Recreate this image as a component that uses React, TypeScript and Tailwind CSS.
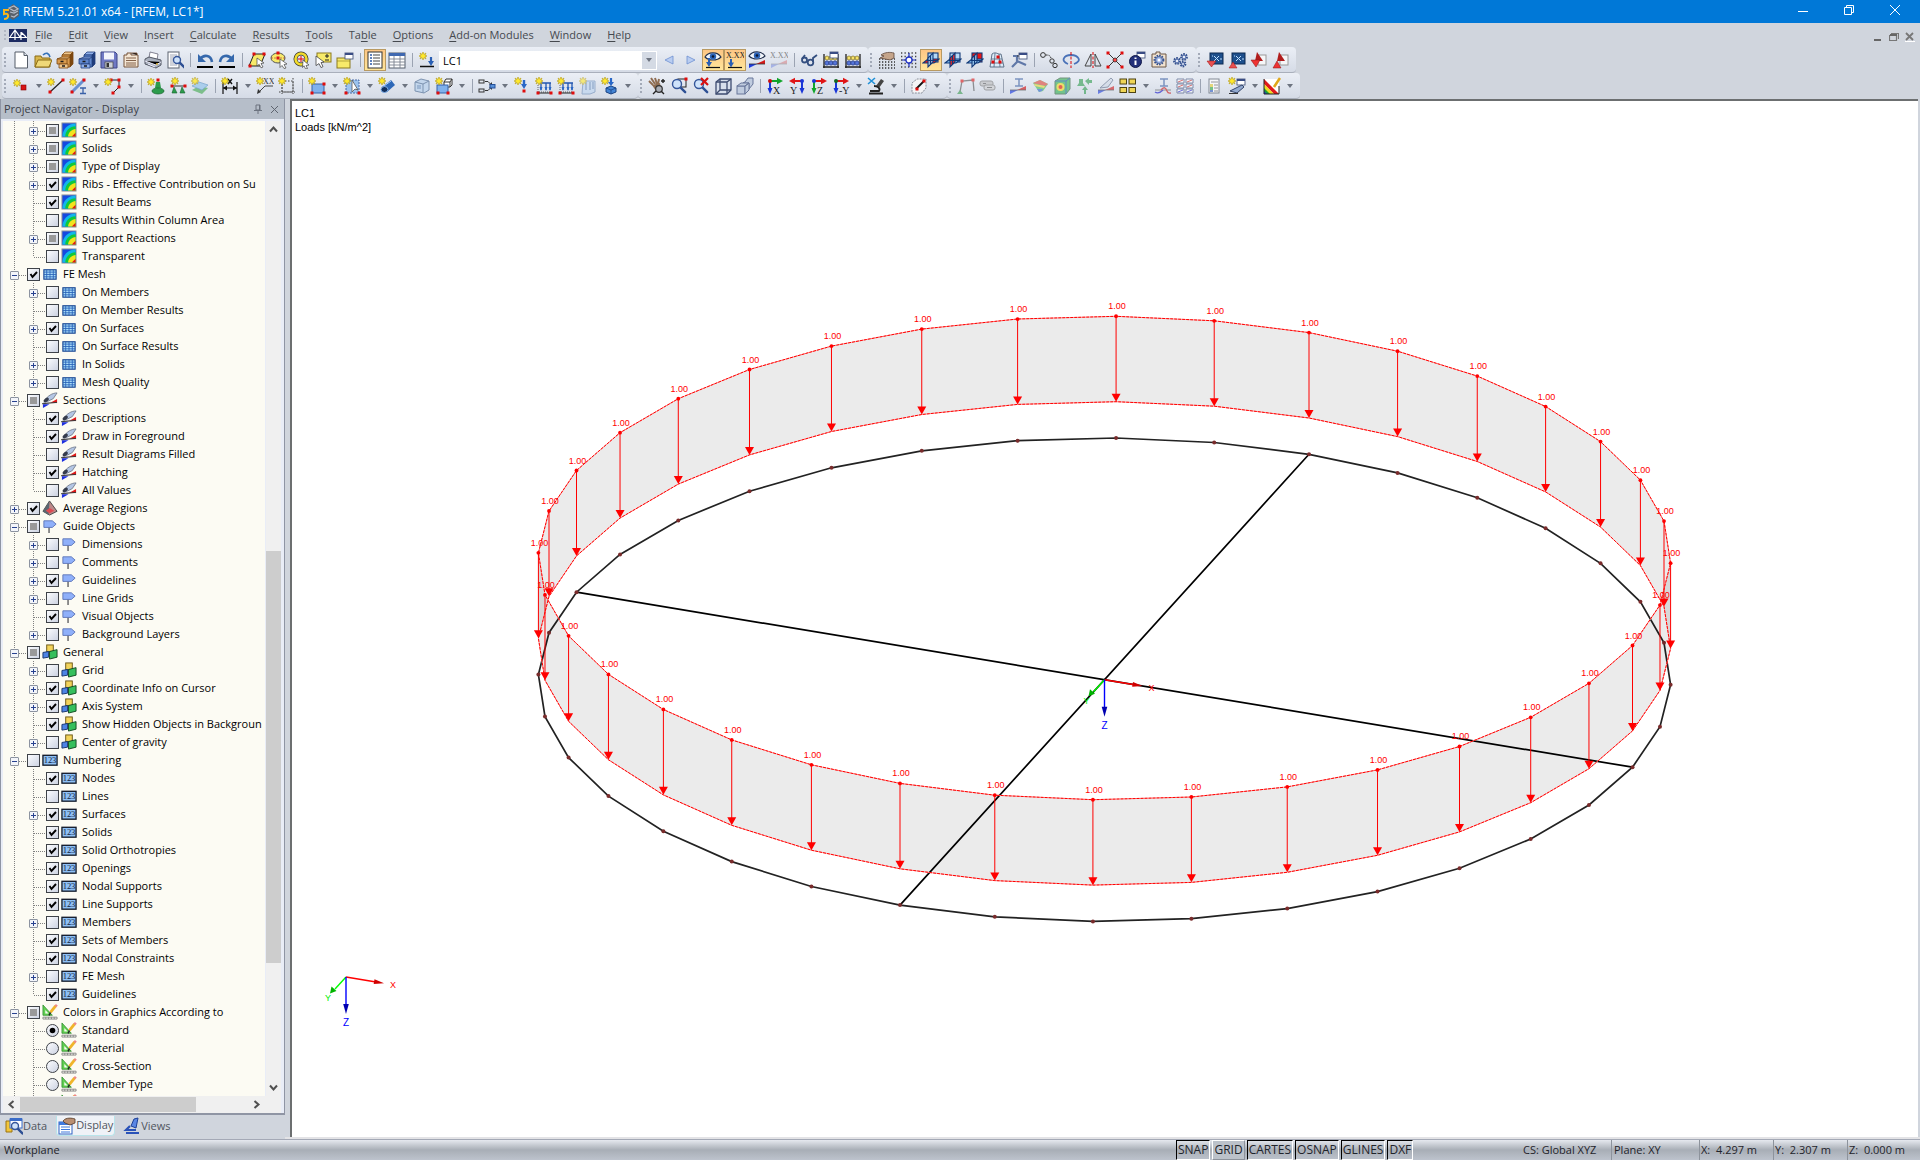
import type { ReactNode } from 'react';

/* ---------- icon building blocks (18 x 18 grid) ---------- */

const Star = ({ x = 4, y = 4 }: { x?: number; y?: number }) => (
  <g transform={`translate(${x} ${y})`}>
    <path d="M0-4L1-1.6 3-3 2-.8 4 0 2 .8 3 3 1 1.6 0 4-1 1.6-3 3-2 .8-4 0-2-.8-3-3-1-1.6z" fill="#ffe92b" stroke="#b59b10" strokeWidth=".6" />
  </g>
);

const Dot = ({ x, y, c = '#e00d0d' }: { x: number; y: number; c?: string }) => (
  <rect x={x - 1.5} y={y - 1.5} width="3" height="3" fill={c} />
);

const Glass = ({ x = 7, y = 7, r = 4 }: { x?: number; y?: number; r?: number }) => (
  <g>
    <path d={`M${x + r * 0.7} ${y + r * 0.7}l5 5`} stroke="#2d4f94" strokeWidth="2.4" strokeLinecap="round" />
    <circle cx={x} cy={y} r={r} fill="#cfe3fa" stroke="#34569a" strokeWidth="1.4" />
  </g>
);

// two stacked filing drawers, the upper one pulled open
const Cabinet = ({ a, b, line }: { a: string; b: string; line: string }) => (
  <g stroke={line} strokeWidth=".8">
    <path d="M6 4l3-3h8l-3 3z" fill={b} />
    <path d="M14 4l3-3v12l-3 3z" fill={line} />
    <path d="M6 4h8v12H6z" fill={a} />
    <path d="M1 8l5-2h8l-3 2z" fill={b} />
    <path d="M1 8h10v5H1z" fill={a} />
    <path d="M3 13h9v4H3z" fill={b} />
    <path d="M4.500 10.500h3M6 15h3" stroke="#1b1b1b" strokeWidth="1.300" />
  </g>
);

const Doc = ({ x = 3, y = 1, w = 12, h = 16 }: { x?: number; y?: number; w?: number; h?: number }) => (
  <rect x={x} y={y} width={w} height={h} fill="#fdfdfe" stroke="#5c6470" />
);

const Win = ({ x, y }: { x: number; y: number }) => (
  <g>
    <rect x={x} y={y} width="8" height="6" fill="#fff" stroke="#4d5b80" strokeWidth=".9" />
    <rect x={x} y={y} width="8" height="2" fill="#3a4d85" />
  </g>
);

const Axes = ({ label, a = '#12a52b', flip = false, d = '#1a36d8', hub = '#c81010' }: { label: string; a?: string; flip?: boolean; d?: string; hub?: string }) => (
  <g>
    <g transform={flip ? 'matrix(-1 0 0 1 18 0)' : undefined}>
      <path d="M4 4h8" stroke={a} strokeWidth="2" />
      <path d="M11 .8L17 4l-6 3.200z" fill={a} />
      <path d="M4 4v9" stroke={d} strokeWidth="2" />
      <path d="M1.500 11h5L4 17z" fill={d} />
      <circle cx="4" cy="4" r="2" fill={hub} />
    </g>
    <text x={flip ? 2 : 7} y="17" fontSize="10" fill="#222" fontFamily="Liberation Serif">{label}</text>
  </g>
);

const Eye = ({ y = 6 }: { y?: number }) => (
  <g>
    <path d={`M1 ${y}c3-5 12-6 16 0-4 4-12 4-16 0z`} fill="#f3f7fc" stroke="#22304e" strokeWidth="1.100" />
    <circle cx="9" cy={y - 0.5} r="3.200" fill="#2b63b8" />
    <circle cx="9" cy={y - 0.5} r="1.300" fill="#0a1530" />
  </g>
);

const Wedge = ({ soft = false }: { soft?: boolean }) => (
  <g opacity={soft ? 0.45 : 1}>
    <path d="M1 17v-4l8 0z" fill="#1d3de0" />
    <path d="M17 9v4H8z" fill="#d31818" />
    <path d="M1 13h16" stroke="#333" strokeWidth=".8" />
  </g>
);

const Planes = ({ front }: { front: 'x' | 'y' | 'z' }) => (
  <g strokeWidth="1.100" stroke="#123a78">
    <rect x="6" y="2" width="10" height="9" fill={front === 'z' ? '#e81717' : '#b5d8f6'} />
    <path d="M1 12l5-4h11l-5 4z" fill={front === 'x' ? '#e81717' : '#79b5ea'} />
    <path d="M6 7l5-5v9l-5 5z" fill={front === 'y' ? '#e81717' : '#9ccbf2'} fillOpacity=".85" />
    <path d="M5 9.500h11M8.500 4.500v9" />
  </g>
);

const Abacus = (
  <g>
    <path d="M2 3v14M16 3v14M1 16h16" stroke="#222" strokeWidth="1.300" />
    <path d="M2 7h14M2 12h14" stroke="#555" />
    <g fill="#f6e26a" stroke="#6b5a10" strokeWidth=".6"><circle cx="5" cy="7" r="2" /><circle cx="9" cy="7" r="2" /><circle cx="13" cy="7" r="2" /></g>
    <g fill="#5574d8" stroke="#1c2f75" strokeWidth=".6"><circle cx="5" cy="12" r="2.200" /><circle cx="9" cy="12" r="2.200" /><circle cx="13" cy="12" r="2.200" /></g>
  </g>
);

const Gear = ({ x, y, r }: { x: number; y: number; r: number }) => (
  <g>
    <circle cx={x} cy={y} r={r} fill="none" stroke="#33508f" strokeWidth="1.800" strokeDasharray="1.600 1" />
    <circle cx={x} cy={y} r={r - 1} fill="#9db4e4" stroke="#33508f" strokeWidth=".8" />
    <circle cx={x} cy={y} r={r / 3} fill="#fff" />
  </g>
);

const LoadFrame = (
  <g>
    <path d="M6 6h10M6 6v7M11 6v7M15 6v7" stroke="#2256b0" strokeWidth="1.300" fill="none" />
    <path d="M4.500 10h3L6 14zM9.500 10h3L11 14zM13.500 10h3L15 14z" fill="#2a67c6" />
    <path d="M3 8v7h13" stroke="#444" strokeWidth=".8" fill="none" strokeDasharray="1 1" />
    <path d="M3 16h13" stroke="#222" />
    <Dot x={3} y={16} /><Dot x={16} y={16} />
    <Star />
  </g>
);

const ibeam = <path d="M6 2h8M10 2v7M6 9h8" stroke="#4568a8" strokeWidth="1.500" fill="none" />;

const icons: Record<string, ReactNode> = {
  bridge: <g><rect width="18" height="13" y="3" fill="#1d2b62" /><path d="M0 11.500h18M6 4v10M12 6v8M1 11l5-7 5 7 2-4 4 4" stroke="#fff" strokeWidth="1.200" fill="none" /></g>,
  new: <g><path d="M3 1h9l3.500 3.500V17H3z" fill="#fff" stroke="#555d68" /><path d="M12 1v3.500h3.500" fill="#dfe5ee" stroke="#555d68" /></g>,
  open: <g><path d="M1 5h6l1 2h8v9H1z" fill="#d8b64c" stroke="#8a6a14" /><path d="M4 9h14l-3 7H1z" fill="#efd878" stroke="#8a6a14" /><path d="M9 4c3-3 6-2 7 2" fill="none" stroke="#3572b8" strokeWidth="1.600" /></g>,
  cabinet: <Cabinet a="#d99b4e" b="#f0c78c" line="#7c4710" />,
  cabinetBlue: <Cabinet a="#5f86cc" b="#8fb0ea" line="#203c7c" />,
  save: <g><path d="M1 1h14l2 2v14H1z" fill="#6f79c4" stroke="#3f4787" /><rect x="4" y="1.500" width="10" height="7" fill="#f2f4fb" /><rect x="5" y="11" width="8" height="6" fill="#cdd1d8" stroke="#444" strokeWidth=".7" /><rect x="6.500" y="12" width="2.500" height="4" fill="#333" /></g>,
  book: <g><path d="M2 4h3V2h4v2h7v12H2z" fill="#f4e6d4" stroke="#77543a" /><path d="M9 2h6v2M4 7h10M4 9.500h10M4 12h10M4 14h10" stroke="#77543a" strokeWidth=".9" /></g>,
  print: <g><path d="M5 7l1-6 8 2-1 6z" fill="#fff" stroke="#667" strokeWidth=".8" /><path d="M1 8l4-2 12 3v5l-5 3-11-4z" fill="#a9b0bd" stroke="#454b57" strokeWidth=".9" /><path d="M1 10l11 4 5-3M4 13l7 3" stroke="#eef" /><circle cx="13" cy="13" r="1" fill="#d8b23c" /></g>,
  preview: <g><Doc x={2} y={1} w={11} /><path d="M4 4h7M4 6h4M4 8h3M4 10h3M4 12h4M4 14h7" stroke="#8a93a3" strokeWidth=".8" /><Glass x={11} y={9} r={3.5} /></g>,
  undo: <g><path d="M4 8c4-5 11-4 12 3" fill="none" stroke="#3568ac" strokeWidth="2.600" /><path d="M2 3v8h8z" fill="#3568ac" /><path d="M1 16h16" stroke="#000" strokeWidth="2" /></g>,
  redo: <g><path d="M14 8C10 3 3 4 2 11" fill="none" stroke="#3568ac" strokeWidth="2.600" /><path d="M16 3v8H8z" fill="#3568ac" /><path d="M1 16h16" stroke="#000" strokeWidth="2" /></g>,
  selPoly: <g><path d="M6 3h11l-5 12H1z" fill="#f7ea6a" stroke="#222" /><Dot x={6} y={3} /><Dot x={16} y={3} /><Dot x={2} y={15} /><path d="M9 7l7 5-3 .5 2 3.500-2 .8-1.800-3.500L9 15z" fill="#fff" stroke="#444" strokeWidth=".7" /></g>,
  selEllipse: <g><ellipse cx="8" cy="7" rx="7" ry="5" fill="#f7ea6a" stroke="#555" /><Dot x={8} y={2} /><Dot x={8} y={7} /><path d="M1 7h14" stroke="#a33" strokeWidth=".6" strokeDasharray="2 1" /><path d="M10 8l7 5-3 .5 2 3.500-2 .5-2-3-2 2z" fill="#fff" stroke="#444" strokeWidth=".7" /></g>,
  selRing: <g><circle cx="9" cy="8" r="5.500" fill="none" stroke="#333" strokeWidth="4" /><circle cx="9" cy="8" r="5.500" fill="none" stroke="#f2dc2c" strokeWidth="2.600" /><path d="M9 5v6M6 8h6" stroke="#e00" /><path d="M11 9l6 5-3 .5 1.500 3-2 .3-1.500-3-1.500 1.700z" fill="#fff" stroke="#444" strokeWidth=".7" /></g>,
  selPlus: <g><rect x="3" y="2" width="14" height="9" fill="#f7ea6a" stroke="#8b7a1f" /><path d="M13 3v4M11 5h4M11 9h4" stroke="#222" /><path d="M2 5l8 6-3 .6 2 4-2 1-2-4-3 2z" fill="#fff" stroke="#444" strokeWidth=".8" /></g>,
  selWin: <g><rect x="1" y="7" width="13" height="10" fill="#f7ea6a" stroke="#8b7a1f" /><path d="M1 10h13" stroke="#8b7a1f" strokeWidth=".6" /><Win x={9} y={2} /></g>,
  list: <g><rect x="2" y="1" width="14" height="16" fill="#fff" stroke="#333" /><path d="M4 4h2M4 7h2M4 10h2M4 13h2" stroke="#2a57a8" strokeWidth="1.600" /><path d="M7 4h7M7 7h7M7 10h7M7 13h7" stroke="#444" /></g>,
  table: <g><rect x="1" y="2" width="16" height="15" fill="#fff" stroke="#555e6c" /><rect x="1" y="2" width="16" height="3" fill="#3f68b0" /><path d="M1 8h16M1 11h16M1 14h16M6 5v12M12 5v12" stroke="#7a828f" strokeWidth=".9" /></g>,
  loadCase: <g><Star x={5} y={5} /><path d="M13 6v6" stroke="#2a5fb4" strokeWidth="2.200" /><path d="M10 10h6l-3 5z" fill="#2a5fb4" /><path d="M2 15.500h14" stroke="#111" strokeWidth="1.500" /></g>,
  prev: <path d="M5 9l8-4v8z" fill="#b9cdf1" stroke="#6d8fd0" strokeWidth=".8" />,
  next: <path d="M13 9L5 5v8z" fill="#b9cdf1" stroke="#6d8fd0" strokeWidth=".8" />,
  eyeLoad: <g><Eye /><path d="M5 7v6" stroke="#2a5fb4" strokeWidth="2" /><path d="M2 11h6l-3 5z" fill="#2a5fb4" /><path d="M2 16.500h14" stroke="#111" strokeWidth="1.200" /></g>,
  xxxLoad: <g><text x="0" y="7" fontSize="8" fill="#222" fontFamily="Liberation Serif">X.XX</text><path d="M5 8v5" stroke="#2a5fb4" strokeWidth="2" /><path d="M2 11.500h6l-3 5z" fill="#2a5fb4" /><path d="M2 16.500h14" stroke="#111" strokeWidth="1.200" /></g>,
  eyeRes: <g><Wedge /><Eye y={5} /></g>,
  xxxRes: <g opacity=".6"><text x="0" y="7" fontSize="8" fill="#444" fontFamily="Liberation Serif">X.XX</text><Wedge soft /></g>,
  glasses: <g fill="none" stroke="#344f80" strokeWidth="1.800"><circle cx="4.500" cy="9" r="2.500" /><circle cx="10.500" cy="11.500" r="2.800" /><path d="M2 8l3-4M13 11V7l4-3" /></g>,
  abacusWin: <g>{Abacus}<Win x={8} y={1} /></g>,
  abacus: Abacus,
  gridHand: <g><path d="M1 8h16M1 11h16M1 14h16M1 17h16" stroke="#333" strokeWidth="1.300" strokeDasharray="1.300 1.700" /><path d="M3 4c4-3 9-3 13-2v5l-4 2-5-1-5-1 4-2z" fill="#c5a58b" stroke="#5e4638" strokeWidth=".8" /></g>,
  gridSnap: <g><path d="M1 2h16M1 5.500h16M1 9h16M1 12.500h16M1 16h16" stroke="#444" strokeWidth="1.300" strokeDasharray="1.300 2.200" /><path d="M9 2v14M2 9h14" stroke="#2334c4" strokeWidth="1.200" /><circle cx="9" cy="9" r="3" fill="#fff" stroke="#2334c4" strokeWidth="1.300" /></g>,
  planeX: <Planes front="x" />,
  planeY: <Planes front="y" />,
  planeZ: <Planes front="z" />,
  meshGrid: <g><path d="M4 3c4-3 6 1 9 0l3 13H2z" fill="#dcebf8" stroke="#51657d" strokeWidth=".9" /><path d="M3 8h11M3 12h12M7 2l-1 14M11 3l1 13" stroke="#51657d" strokeWidth=".8" /><Dot x={5} y={11} /><Dot x={12} y={11} /><Dot x={10} y={6} /></g>,
  wrenchWin: <g><path d="M2 16l5-5V5H3M7 10l9 4" stroke="#6078a8" strokeWidth="2.200" fill="none" /><path d="M7 5h3" stroke="#333" /><Win x={9} y={2} /></g>,
  pathDots: <g fill="none" stroke="#333"><circle cx="3" cy="4" r="2.400" /><path d="M6 4c4 0 4 1 5 3" strokeDasharray="1.500 1" /><circle cx="12" cy="10" r="2.200" /><circle cx="15" cy="14.500" r="2.200" /></g>,
  rotate: <g><path d="M6 13C-2 10 2 4 9 4s12 6 3 9" fill="none" stroke="#4a72b8" strokeWidth="1.800" /><path d="M9 1v16" stroke="#d00" strokeDasharray="3 1.500" /></g>,
  mirror: <g fill="none"><path d="M7 3v12H1zM11 3v12h6z" stroke="#444" /><path d="M9 1v16" stroke="#d00" strokeDasharray="3 1.500" /></g>,
  scaleX: <g><path d="M2 2l14 14M16 2L2 16" stroke="#333" /><Dot x={2} y={2} /><Dot x={16} y={2} /><Dot x={2} y={16} /><Dot x={16} y={16} /><circle cx="9" cy="9" r="2" fill="#f44" stroke="#222" strokeWidth=".7" /></g>,
  info: <g><Win x={9} y={1} /><circle cx="7.500" cy="10.500" r="6" fill="#22307a" stroke="#101848" /><path d="M7.500 6.500v1.600M7.500 9.500v4.500" stroke="#fff" strokeWidth="2" /></g>,
  gearBox: <g><path d="M2 3h4V1h4v2h6v13H2z" fill="#f2e3cf" stroke="#6b5646" /><Gear x={9} y={9} r={4.5} /></g>,
  gears: <g><Gear x={5} y={10} r={3} /><Gear x={12} y={6} r={3} /><Gear x={11} y={13} r={2.5} /></g>,
  cadDown: <g><rect x="4" y="2" width="13" height="11" fill="#1d4f8c" stroke="#0d2a52" /><path d="M8 5l5 5M13 5l-5 5M6 5h1M14 8h2" stroke="#bfe0ff" /><path d="M1 10h9l-4.500 6z" fill="#e85050" stroke="#a01010" strokeWidth=".5" /></g>,
  cadUp: <g><rect x="4" y="2" width="13" height="11" fill="#1d4f8c" stroke="#0d2a52" /><path d="M8 5l5 5M13 5l-5 5M6 5h1M14 8h2" stroke="#bfe0ff" /><path d="M1 17h8l-4-6z" fill="#e85050" stroke="#a01010" strokeWidth=".5" /></g>,
  pdfDown: <g><rect x="8" y="4" width="8" height="10" fill="#f6f6f8" stroke="#999" /><path d="M7 1l6 9H5z" fill="#b11c1c" /><path d="M1 9h9l-4 7z" fill="#e33" stroke="#8a1010" strokeWidth=".5" /></g>,
  pdfUp: <g><rect x="8" y="4" width="8" height="10" fill="#f6f6f8" stroke="#999" /><path d="M7 1l6 9H5z" fill="#b11c1c" /><path d="M1 17h8l-4-7z" fill="#e33" stroke="#8a1010" strokeWidth=".5" /></g>,

  node: <g><Star x={5} y={6} /><rect x="9" y="8" width="5" height="5" fill="#d81515" stroke="#800" strokeWidth=".6" /></g>,
  line: <g><path d="M3 15L16 3" stroke="#222" strokeWidth="1.200" /><Dot x={16} y={3} /><Dot x={3} y={15} /><Star x={4} y={5} /></g>,
  member: <g><path d="M3 15L15 3" stroke="#6a92d0" strokeWidth="3" /><Dot x={15} y={3} /><Dot x={3} y={15} /><path d="M11 11h6M14 11v5M11 16.500h6" stroke="#3a61a8" strokeWidth="1.300" /><Star x={4} y={5} /></g>,
  polyline: <g><path d="M6 3h9v7l-6 6" fill="none" stroke="#222" /><Dot x={7} y={3} /><Dot x={15} y={3} /><Dot x={15} y={10} /><Dot x={9} y={16} /><Star x={4} y={5} /></g>,
  support: <g><path d="M9 5h4l1 6H8z" fill="#2c9c4c" /><ellipse cx="11" cy="14" rx="6" ry="3" fill="#2c9c4c" stroke="#126028" strokeWidth=".7" /><Dot x={11} y={3} /><Star x={4} y={5} /></g>,
  supports: <g><path d="M3 9h13" stroke="#333" /><Dot x={3} y={9} /><Dot x={16} y={9} /><path d="M5 10l3 6H3zM13 10l3 6h-5z" fill="#2c9c4c" stroke="#126028" strokeWidth=".6" /><Star x={6} y={4} /></g>,
  surfSupport: <g opacity=".8"><path d="M1 13l7-4 9 2-6 6z" fill="#66b774" /><path d="M1 9l7-4 9 3-6 5z" fill="#9ec9ec" stroke="#5e94c4" strokeWidth=".7" /><Star x={4} y={4} /></g>,
  dim: <g><path d="M2 5v12M16 5v12M2 11h14" stroke="#111" strokeWidth="1.200" /><path d="M2 11l4-2.500v5zM16 11l-4-2.500v5z" fill="#111" /><path d="M7 2l4 5M11 2L7 7" stroke="#111" strokeWidth="1.400" /><Star x={4} y={4} /></g>,
  comment: <g><text x="7" y="7" fontSize="8" fill="#333" fontFamily="Liberation Serif">XX</text><path d="M4 14L9 9h8" fill="none" stroke="#444" /><path d="M1 17l1-5 3 3z" fill="#333" /><Star x={4} y={4} /></g>,
  guideRect: <g><path d="M4 4h11v11H4zM1 15h16M15 1v16M4 1v16" fill="none" stroke="#444" strokeDasharray="1.500 1.500" /><Star x={4} y={4} /></g>,
  surface: <g><rect x="4" y="7" width="12" height="9" fill="#80b1ec" stroke="#3462a8" /><Dot x={4} y={16} /><Dot x={16} y={7} /><Dot x={16} y={16} /><Star x={4} y={4} /></g>,
  opening: <g><rect x="3" y="3" width="13" height="13" fill="#9cc3ee" stroke="#486da8" strokeDasharray="2 1" /><path d="M9 3l6 10-3-1-3 3z" fill="#fff" stroke="#555" strokeWidth=".8" /><Dot x={3} y={16} /><Dot x={16} y={16} /><Star x={4} y={4} /></g>,
  pipe: <g><path d="M4 10L13 3l4 5-8 7z" fill="#2d68b8" /><ellipse cx="6.500" cy="12.500" rx="3.500" ry="3" fill="#12305e" stroke="#7fb0ea" /><path d="M6 9l7-5" stroke="#a7d0ff" /><Star x={4} y={4} /></g>,
  solid: <g><path d="M2 5l6-3 8 2v9l-5 3-9-2z" fill="#c3d6ec" stroke="#7d93b0" /><path d="M2 5l8 2 6-3M10 7v9" stroke="#7d93b0" fill="none" /><rect x="4" y="8" width="4" height="4" fill="#9eb6d4" /></g>,
  solidSet: <g><path d="M9 5l2-3h6v6l-2 2H9z" fill="#fff" stroke="#333" /><path d="M9 5h6v5M15 5l2-3" stroke="#333" fill="none" /><rect x="2" y="8" width="11" height="8" fill="#80b1ec" stroke="#3462a8" /><Dot x={13} y={16} /><Dot x={3} y={16} /><Star x={4} y={4} /></g>,
  release: <g fill="none"><rect x="1" y="3" width="5" height="3" stroke="#333" /><rect x="1" y="12" width="5" height="3" stroke="#333" /><path d="M7 4.500h3l3 3M7 13.500h3l3-3" stroke="#333" /><path d="M14 9V5l-3 3zM14 9v4l-3-3z" fill="#333" /><rect x="12" y="7.500" width="5" height="3.500" fill="#5890d8" stroke="#26519a" /></g>,
  nodalLoad: <g><path d="M11 3v6" stroke="#2a67c6" strokeWidth="2.400" /><path d="M8 7h6l-3 5z" fill="#2a67c6" /><Dot x={11} y={14} /><Star x={5} y={4} /></g>,
  lineLoad: LoadFrame,
  memberLoad: LoadFrame,
  surfLoad: <g opacity=".6"><path d="M4 4h12v11l-5 2H3z" fill="#bcd5f2" stroke="#6c8cb8" /><path d="M7 5v8M11 5v8M14 5v7" stroke="#6c8cb8" strokeWidth="1.400" /><Star x={4} y={4} /></g>,
  solidLoad: <g><path d="M10 1v5" stroke="#2a67c6" strokeWidth="2.200" /><path d="M7 5h6l-3 4z" fill="#2a67c6" /><path d="M5 11l5-2 5 2v4l-5 2-5-2z" fill="#4384d4" stroke="#1c4484" /><path d="M5 11l5 2 5-2M10 13v4" fill="none" stroke="#1c4484" strokeWidth=".8" /><Star x={4} y={4} /></g>,
  handZoom: <g><path d="M1 4l4 4M3 1l4 6M7 1l2 6M11 2l-1 5" stroke="#8f6d52" strokeWidth="2" /><path d="M4 8l8-2 1 6-5 2z" fill="#8f6d52" /><circle cx="11" cy="12" r="3.300" fill="#a9adb5" stroke="#333" strokeWidth="1.200" /><path d="M13 14l3 3M8 14l-3 3M13 4h4M15 2v4" stroke="#222" strokeWidth="1.400" /></g>,
  zoomWin: <g><rect x="8" y="2" width="8" height="8" fill="none" stroke="#222" /><Glass x={7} y={7} r={4.5} /><Dot x={16} y={2} /></g>,
  zoomX: <g><Glass x={7} y={7} r={4.5} /><path d="M9 1l7 7M16 1L9 8" stroke="#d81010" strokeWidth="2.200" /></g>,
  wireCube: <g fill="#d7dfec" stroke="#3e4c70" strokeWidth="1.300"><path d="M2 5l4-3h11v11l-4 4H2z" /><path d="M2 5h11v12M13 5l4-3M6 2v11h11M6 13l-4 4" fill="none" /></g>,
  cubes: <g fill="#c0ccdf" stroke="#68779a"><path d="M9 5l3-4h5v6l-4 5V6H7z" /><rect x="1" y="9" width="8" height="8" /><path d="M1 9l4-3h8L9 9zM9 9l4-3v7l-4 4z" /></g>,
  viewX: <Axes label="X" />,
  viewY: <Axes label="Y" a="#e01515" hub="#1a36d8" flip />,
  viewZ: <Axes label="Z" a="#e01515" d="#12a52b" hub="#1a36d8" />,
  viewMY: <Axes label="-Y" a="#e01515" hub="#126a22" />,
  microX: <g><path d="M1 1l7 6M8 1L1 7" stroke="#1e90d8" strokeWidth="1.600" /><path d="M9 9l5-7 3 2-5 7z" fill="#444" /><path d="M7 9c3 0 7 2 5 5H3M2 16.500h14" stroke="#222" strokeWidth="1.800" fill="none" /></g>,
  cubeLine: <g><path d="M2 6l5-4h9v9l-4 5H2z" fill="#f4f4f6" stroke="#8a8f9a" strokeDasharray="2 1" /><path d="M6 12l8-8" stroke="#111" strokeWidth="1.800" /><Dot x={14} y={4} /><Dot x={7} y={12} /></g>,
  frame: <g opacity=".6"><path d="M3 15L5 4l11-1 1 11" fill="none" stroke="#555" strokeWidth="1.300" /><Dot x={5} y={4} /><Dot x={16} y={3} /><path d="M0 17l3-4 3 4z" fill="#3a9c50" /></g>,
  roll: <g opacity=".6"><rect x="1" y="4" width="13" height="5" rx="2" fill="#bbb" stroke="#777" /><rect x="5" y="8" width="11" height="5" rx="2" fill="#ccc" stroke="#777" /><path d="M4 6.500h3M8 10.500h5" stroke="#555" /></g>,
  beamRes: <g opacity=".65"><Wedge />{ibeam}</g>,
  rainbow: <g opacity=".7"><path d="M2 6l7-3 8 4-5 7-4 1z" fill="#5cc46a" /><path d="M2 6l7-3 8 4-3 2z" fill="#e05a50" /><path d="M3 7l11 2-1 2-9-2z" fill="#f0d84c" /><path d="M6 12l6 0-1 2-3 1z" fill="#4476d4" /></g>,
  isoCube: <g opacity=".8"><path d="M2 4l5-3h10v11l-4 5H2z" fill="#58bd74" stroke="#5a8064" /><path d="M2 4h11v13M13 4l4-3" fill="none" stroke="#4472b8" /><circle cx="7.500" cy="10" r="4" fill="#f2dc4a" /><circle cx="7.500" cy="10" r="2" fill="#e04434" /></g>,
  reaction: <g opacity=".6"><path d="M4 2h4v4l2 3H2l2-3zM10 4l4-3v2h3v3h-3v2z" fill="#2f9c4e" /><path d="M9 17v-4H7l3-4 3 4h-2v4z" fill="#2f9c4e" /></g>,
  knife: <g opacity=".6"><Wedge /><path d="M3 11L14 1l2 2-5 7z" fill="#cfd8e6" stroke="#5d6c88" /></g>,
  fourWin: <g fill="#efd556" stroke="#4d4313"><rect x="1" y="2" width="6.500" height="5" /><rect x="10" y="2" width="6.500" height="5" /><rect x="1" y="10.500" width="6.500" height="5" /><rect x="10" y="10.500" width="6.500" height="5" /></g>,
  wave: <g opacity=".65">{ibeam}<path d="M1 13h16" stroke="#333" strokeWidth=".7" /><path d="M1 15c3 2 5 1 8-2" fill="none" stroke="#22c" strokeWidth="1.300" /><path d="M7 13c3-4 5-2 6 1s3 2 4 2" fill="none" stroke="#c22" strokeWidth="1.300" /></g>,
  resTable: <g opacity=".65"><path d="M1 2h7v4H1zM10 2h7v4h-7zM1 7h7v4H1zM10 7h7v4h-7zM1 12h7v4H1zM10 12h7v4h-7z" fill="#fff" stroke="#4a5d85" /><path d="M2 5l5-2M11 5l5-2M2 10l5-2M11 10l5-2" stroke="#c33" /><path d="M2 15l5-2M11 15l5-2" stroke="#33c" /></g>,
  colorDoc: <g opacity=".7"><Doc x={3} y={2} w={10} h={14} /><path d="M5 5h7M8 8h4M8 11h4M8 14h4" stroke="#777" /><path d="M4 7h3v3H4z" fill="#e6d04a" /><path d="M4 10h3v3H4z" fill="#4bb35f" /><path d="M4 13h3v2H4z" fill="#4a72c8" /></g>,
  sectionWin: <g><Win x={9} y={2} /><path d="M2 14L14 8l2 2-7 6z" fill="#92a9cf" stroke="#34456b" /><path d="M1 16.500h9" stroke="#333" /><Star x={4} y={4} /></g>,
  palette: <g><rect x="1" y="2" width="15" height="15" fill="#fff" /><path d="M1 2l15 15H11L1 7z" fill="#e01a1a" /><path d="M1 7l10 10H6L1 12z" fill="#f0dc20" /><path d="M1 11l6 6H1z" fill="#1fa038" /><path d="M1 14l3 3H1z" fill="#1c3fd0" /><path d="M17 1l-6 9" stroke="#e0a81a" strokeWidth="2.600" /><path d="M1 2v15h15V9" stroke="#222" fill="none" /></g>,

  /* navigator icons */
  result: <g><rect x="1" y="1" width="15" height="15" fill="#1549e0" stroke="#999" /><path d="M15.500 1.500v14h-14c0-8 6-14 14-14z" fill="#11b6ea" /><path d="M15.500 4.500v11h-11c0-6 5-11 11-11z" fill="#12c93a" /><path d="M15.500 7.500v8h-8c0-4 4-8 8-8z" fill="#f3e31d" /><path d="M15.500 11.500v4h-4z" fill="#e21414" /></g>,
  mesh: <g><rect x="2" y="4" width="13" height="10" fill="#a8dcf8" stroke="#15428f" strokeWidth="1.200" /><path d="M2 6.500h13M2 9h13M2 11.500h13M5 4v10M8.500 4v10M12 4v10" stroke="#2660b8" strokeWidth=".9" /></g>,
  section: <g><path d="M1 11l15-1v2l-8 0-7 4z" fill="#c9c9cf" /><path d="M1 17v-4h7z" fill="#1d2fe0" /><path d="M16 7.500v4h-7z" fill="#e01818" /><path d="M0 12.500l16-1.500" stroke="#333" /><path d="M3 9C6 4 11 1 16 1l-4 6-6 3z" fill="#b4c6e4" stroke="#6c7588" strokeWidth=".9" /><ellipse cx="4.500" cy="8.500" rx="3.200" ry="1.900" fill="#363c4c" transform="rotate(-35 4.500 8.500)" /></g>,
  pyramid: <g><path d="M8 1l8 11-8 4-7-4z" fill="#b88" stroke="#444" /><path d="M8 1L1 12l6 4z" fill="#5b6770" /><path d="M4 11.500l4-3 5 3-5 2.500z" fill="#e04a52" /></g>,
  sign: <g><path d="M7.500 4v12" stroke="#888" strokeWidth="2" /><path d="M2 3h9l4 3.500L11 10H2z" fill="#8fb0fa" stroke="#5f76b8" /></g>,
  blocks: <g><rect x="5" y="1" width="7" height="7" fill="#f2d35a" stroke="#6b5714" /><path d="M1 9l6-1v6l-6 1z" fill="#4d83e4" stroke="#16336e" /><path d="M8 8l8-2v8l-8 2z" fill="#35bf5c" stroke="#124a22" /></g>,
  numbers: <g><rect x="1" y="3.500" width="15" height="10.500" fill="#8fc1f5" stroke="#111827" strokeWidth="1.400" /><text x="8.500" y="12" fontSize="9" textAnchor="middle" fill="#0f1c3c" fontFamily="Liberation Serif">123</text></g>,
  pencil: <g><path d="M1 1v11h10z" fill="#62cf52" stroke="#2b8a2b" strokeWidth=".8" /><path d="M3.500 6.500v3.500h3.500z" fill="#fbfbf5" /><path d="M14.500 2l-5.500 7" stroke="#f0b52a" strokeWidth="3" /><path d="M14 1l2 1.500" stroke="#e88" strokeWidth="2.400" /><path d="M9 9l-1.500 3" stroke="#222" strokeWidth="1.600" /><path d="M1 16h15M1 14h15M1 14v2M4 14v2M7 14v2M10 14v2M13 14v2M16 14v2" stroke="#888" /></g>,
  tabData: <g><path d="M1 4h6v11H1z" fill="#f2c63a" stroke="#9a7412" /><rect x="5" y="2" width="12" height="9" fill="#fff" stroke="#3a6cc8" /><rect x="5" y="1" width="12" height="3" fill="#3a6cc8" /><Glass x={10} y={9} r={3.5} /></g>,
  tabDisplay: <g><rect x="1" y="5" width="13" height="12" fill="#fff" stroke="#2f62c4" /><rect x="1" y="5" width="13" height="3" fill="#3f78dc" /><path d="M3 10h9M3 12.500h9M3 15h9" stroke="#3f78dc" /><path d="M5 4c3-4 9-3 12-2v4l-5 2-5-2z" fill="#b98f72" stroke="#543a2a" strokeWidth=".8" /></g>,
  tabViews: <g><path d="M8 9l3-7 4-1-2 10z" fill="#5a86e4" stroke="#1d3f96" /><path d="M7 9l-4 4h10M3 16h13" stroke="#2a52b8" strokeWidth="2.200" fill="none" /></g>,
};

const Icon = ({ name, small = false }: { name: string; small?: boolean }) => (
  <svg viewBox={small ? '0 0 17 17' : '0 0 18 18'} className={small ? 'size-4 shrink-0' : 'size-[18px] shrink-0'} aria-hidden="true">
    {icons[name]}
  </svg>
);

/* ---------- menu + toolbars ---------- */

const menus: [string, string, string][] = [
  ['', 'F', 'ile'], ['', 'E', 'dit'], ['', 'V', 'iew'], ['', 'I', 'nsert'], ['', 'C', 'alculate'], ['', 'R', 'esults'],
  ['', 'T', 'ools'], ['Ta', 'b', 'le'], ['', 'O', 'ptions'], ['', 'A', 'dd-on Modules'], ['', 'W', 'indow'], ['', 'H', 'elp'],
];

// "|" separator, "name+" has a drop-down arrow, "name*" is switched on
const rowOne = [
  'new open cabinet cabinetBlue save book print preview | undo redo | selPoly selEllipse selRing selPlus selWin | list* table | loadCase combo prev next eyeLoad* xxxLoad* eyeRes xxxRes | glasses abacusWin abacus',
  'gridHand gridSnap planeX* planeY planeZ meshGrid wrenchWin | pathDots rotate mirror scaleX info gearBox gears',
  'cadDown cadUp pdfDown pdfUp',
];
const rowTwo = [
  'node+ line member+ polyline+ | support supports surfSupport | dim+ comment guideRect | surface+ opening+ pipe+ solid solidSet+ | release+ nodalLoad lineLoad memberLoad surfLoad solidLoad+',
  'handZoom zoomWin zoomX wireCube cubes | viewX viewY viewZ viewMY+ microX+ | cubeLine+',
  'frame roll | beamRes rainbow isoCube reaction knife fourWin+ wave resTable | colorDoc sectionWin+ palette+',
];

const Caret = () => (
  <svg viewBox="0 0 6 4" className="h-1 w-1.5" aria-hidden="true"><path d="M0 0h6L3 4z" fill="#6d7480" /></svg>
);

function ToolItem({ id }: { id: string }) {
  if (id === '|') return <span className="flex w-2 justify-center"><span className="h-[14px] w-px bg-[#9ba3b2]" /></span>;
  if (id === 'combo') {
    return (
      <span className="relative mx-px flex h-[19px] w-[218px] bg-white">
        <select aria-label="Load case" className="w-full appearance-none bg-white pl-1 text-[11px] leading-[19px] text-black outline-none">
          <option>LC1</option>
        </select>
        <span className="pointer-events-none absolute inset-y-px right-px flex w-[14px] items-center justify-center bg-[#d4dae4]"><Caret /></span>
      </span>
    );
  }
  const on = id.endsWith('*');
  const drop = id.endsWith('+');
  const name = id.replace(/[*+]$/, '');
  return (
    <>
      <button
        type="button"
        aria-label={name}
        className={`flex h-[22px] w-[22px] items-center justify-center ${on ? 'border border-[#b99a62] bg-linear-to-b from-[#fdc685] to-[#ffe69a]' : ''}`}
      >
        <Icon name={name} />
      </button>
      {drop && <button type="button" aria-label={`${name} options`} className="flex h-[22px] w-[13px] items-center justify-center"><Caret /></button>}
    </>
  );
}

const Toolbar = ({ groups }: { groups: string[] }) => (
  <div className="flex h-[26px] pl-0.5">
    {groups.map((g) => (
      <div key={g} className="flex h-[26px] items-center rounded-sm border-b border-[#a9afbb] bg-linear-to-b from-[#ebeff6] to-[#d5dbe6] pt-px pr-1">
        <span className="flex w-2 flex-col gap-0.5 pl-0.5">
          <i className="size-0.5 bg-[#a3aab8]" /><i className="size-0.5 bg-[#a3aab8]" /><i className="size-0.5 bg-[#a3aab8]" /><i className="size-0.5 bg-[#a3aab8]" />
        </span>
        {g.split(' ').map((id, i) => <ToolItem key={i} id={id} />)}
      </div>
    ))}
  </div>
);

/* ---------- project navigator ---------- */

// level, expander, state (0 off, 1 on, 2 mixed, r/R radio), icon, label
type Row = [1 | 2, '+' | '-' | '', 0 | 1 | 2 | 'r' | 'R', string, string];

const rows: Row[] = [
  [2, '+', 2, 'result', 'Surfaces'],
  [2, '+', 2, 'result', 'Solids'],
  [2, '+', 2, 'result', 'Type of Display'],
  [2, '+', 1, 'result', 'Ribs - Effective Contribution on Su'],
  [2, '', 1, 'result', 'Result Beams'],
  [2, '', 0, 'result', 'Results Within Column Area'],
  [2, '+', 2, 'result', 'Support Reactions'],
  [2, '', 0, 'result', 'Transparent'],
  [1, '-', 1, 'mesh', 'FE Mesh'],
  [2, '+', 0, 'mesh', 'On Members'],
  [2, '', 0, 'mesh', 'On Member Results'],
  [2, '+', 1, 'mesh', 'On Surfaces'],
  [2, '', 0, 'mesh', 'On Surface Results'],
  [2, '+', 0, 'mesh', 'In Solids'],
  [2, '+', 0, 'mesh', 'Mesh Quality'],
  [1, '-', 2, 'section', 'Sections'],
  [2, '', 1, 'section', 'Descriptions'],
  [2, '', 1, 'section', 'Draw in Foreground'],
  [2, '', 0, 'section', 'Result Diagrams Filled'],
  [2, '', 1, 'section', 'Hatching'],
  [2, '', 0, 'section', 'All Values'],
  [1, '+', 1, 'pyramid', 'Average Regions'],
  [1, '-', 2, 'sign', 'Guide Objects'],
  [2, '+', 0, 'sign', 'Dimensions'],
  [2, '+', 0, 'sign', 'Comments'],
  [2, '+', 1, 'sign', 'Guidelines'],
  [2, '+', 0, 'sign', 'Line Grids'],
  [2, '', 1, 'sign', 'Visual Objects'],
  [2, '+', 0, 'sign', 'Background Layers'],
  [1, '-', 2, 'blocks', 'General'],
  [2, '+', 0, 'blocks', 'Grid'],
  [2, '+', 1, 'blocks', 'Coordinate Info on Cursor'],
  [2, '+', 1, 'blocks', 'Axis System'],
  [2, '', 1, 'blocks', 'Show Hidden Objects in Backgroun'],
  [2, '+', 0, 'blocks', 'Center of gravity'],
  [1, '-', 0, 'numbers', 'Numbering'],
  [2, '', 1, 'numbers', 'Nodes'],
  [2, '', 0, 'numbers', 'Lines'],
  [2, '+', 1, 'numbers', 'Surfaces'],
  [2, '', 1, 'numbers', 'Solids'],
  [2, '', 1, 'numbers', 'Solid Orthotropies'],
  [2, '', 1, 'numbers', 'Openings'],
  [2, '', 1, 'numbers', 'Nodal Supports'],
  [2, '', 1, 'numbers', 'Line Supports'],
  [2, '+', 0, 'numbers', 'Members'],
  [2, '', 1, 'numbers', 'Sets of Members'],
  [2, '', 1, 'numbers', 'Nodal Constraints'],
  [2, '+', 0, 'numbers', 'FE Mesh'],
  [2, '', 1, 'numbers', 'Guidelines'],
  [1, '-', 2, 'pencil', 'Colors in Graphics According to'],
  [2, '', 'R', 'pencil', 'Standard'],
  [2, '', 'r', 'pencil', 'Material'],
  [2, '', 'r', 'pencil', 'Cross-Section'],
  [2, '', 'r', 'pencil', 'Member Type'],
  [2, '', 'r', 'pencil', ''],
];

function TreeRow({ row, last, id }: { row: Row; last: boolean; id: string }) {
  const [level, exp, state, icon, label] = row;
  const x = level === 1 ? 11 : 30;
  const radio = state === 'r' || state === 'R';
  return (
    <li className="flex h-[18px] items-center whitespace-nowrap">
      <span className={`relative h-[18px] shrink-0 ${level === 1 ? 'w-6' : 'w-[43px]'}`}>
        <svg className="absolute inset-0 h-full w-full" aria-hidden="true">
          <g stroke="#808080" strokeDasharray="1 1" shapeRendering="crispEdges">
            <path d="M11.500 0v18" />
            {level === 2 && <path d={last ? 'M30.500 0v10' : 'M30.500 0v18'} />}
            <path d={`M${x + 1} 10.500h11`} />
          </g>
        </svg>
        {exp && (
          <button
            type="button"
            aria-label={exp === '+' ? 'Expand' : 'Collapse'}
            className={`absolute top-1.5 flex size-[9px] items-center justify-center rounded-[1px] border border-[#8c93a0] bg-[#f3f5fa] ${level === 1 ? 'left-[7px]' : 'left-[26px]'}`}
          >
            <svg viewBox="0 0 5 5" className="size-[5px] shrink-0" shapeRendering="crispEdges"><path d={exp === '+' ? 'M0 2.500h5M2.500 0v5' : 'M0 2.500h5'} stroke="#27418f" /></svg>
          </button>
        )}
      </span>
      <span className="relative size-[13px] shrink-0">
        <input
          id={id}
          type={radio ? 'radio' : 'checkbox'}
          name={radio ? 'colors' : undefined}
          aria-label={label || 'Option'}
          aria-checked={state === 2 ? 'mixed' : undefined}
          defaultChecked={state === 1 || state === 'R'}
          className={`peer block size-[13px] appearance-none border border-[#3e4248] bg-linear-to-br from-[#fbfcfe] to-[#cdd3e2] ${radio ? 'rounded-full' : ''}`}
        />
        {state === 2 && <i className="pointer-events-none absolute inset-[3px] bg-[#999999]" />}
        {state !== 2 && (
          <svg viewBox="0 0 13 13" className="pointer-events-none invisible absolute inset-0 size-[13px] peer-checked:visible" aria-hidden="true">
            {radio ? <circle cx="6.500" cy="6.500" r="2.800" /> : <path d="M3.500 6l2 3 4.500-5" fill="none" stroke="#000" strokeWidth="1.900" />}
          </svg>
        )}
      </span>
      <span className="ml-0.5 flex w-[21px] shrink-0"><Icon name={icon} small /></span>
      <label htmlFor={id}>{label}</label>
    </li>
  );
}

const Chevron = ({ d }: { d: string }) => (
  <svg viewBox="0 0 9 9" className="size-[9px]" aria-hidden="true"><path d={d} fill="none" stroke="#505050" strokeWidth="2" /></svg>
);

function Navigator() {
  return (
    <aside className="flex w-[285px] shrink-0 flex-col">
      <div className="flex min-h-0 flex-1 flex-col border-r border-b-2 border-l border-[#8f95a4] bg-[#e9edf7] pr-[3px] pl-0.5">
        <header className="-mr-[3px] -ml-0.5 flex h-5 shrink-0 items-center bg-[#b6bec9] pr-0.5 pl-[3px] text-[#3b4048]">
          <h2 className="flex-1">Project Navigator - Display</h2>
          <button type="button" aria-label="Pin" className="flex size-4 items-center justify-center">
            <svg viewBox="0 0 10 10" className="size-2.5"><path d="M3 1h4v5H3zM1 6.500h8M5 7v3M6.500 1v5" fill="none" stroke="#6c737f" /></svg>
          </button>
          <button type="button" aria-label="Close" className="flex size-4 items-center justify-center">
            <svg viewBox="0 0 9 9" className="size-[9px]"><path d="M1 1l7 7M8 1L1 8" stroke="#5f6570" /></svg>
          </button>
        </header>
        <div className="mt-0.5 flex min-h-0 flex-1">
          <div className="min-w-0 flex-1 overflow-hidden bg-[#fcfbf3]">
            <ul className="h-0">
              {rows.map((r, i) => (
                <TreeRow key={i} id={`opt-${i}`} row={r} last={r[0] === 2 && rows[i + 1]?.[0] === 1} />
              ))}
            </ul>
          </div>
          <div className="ml-px flex w-[15px] flex-col bg-[#f0f0f0]">
            <button type="button" aria-label="Scroll up" className="flex h-[17px] items-center justify-center"><Chevron d="M1 6.500l3.500-4 3.500 4" /></button>
            <span className="flex-[413]" />
            <span className="flex-[413] bg-[#cdcdcd]" />
            <span className="flex-[116]" />
            <button type="button" aria-label="Scroll down" className="flex h-[17px] items-center justify-center"><Chevron d="M1 2.500l3.500 4 3.500-4" /></button>
          </div>
        </div>
        <div className="flex h-[17px] items-center bg-[#f0f0f0] pr-4">
          <button type="button" aria-label="Scroll left" className="flex w-[17px] justify-center"><Chevron d="M6.500 1l-4 3.500 4 3.500" /></button>
          <span className="h-[15px] flex-[176] bg-[#cdcdcd]" />
          <span className="flex-[52]" />
          <button type="button" aria-label="Scroll right" className="flex w-[17px] justify-center"><Chevron d="M2.500 1l4 3.500-4 3.500" /></button>
        </div>
      </div>
      <nav className="flex h-6 items-start gap-2 pt-px pl-1 text-[#50555e]">
        <button type="button" className="flex h-5 items-center px-px"><Icon name="tabData" />Data</button>
        <button type="button" className="flex h-5 items-center rounded-b-sm border border-t-0 border-[#b9e4ea] bg-[#eff2f7] px-px"><Icon name="tabDisplay" />Display</button>
        <button type="button" className="flex h-5 items-center"><Icon name="tabViews" />Views</button>
      </nav>
    </aside>
  );
}

/* ---------- model view ---------- */

const CX = 812.5;
const CY = 578.7;
const LIFT = 36.3;
const TOP = 121.7;

const nodes = Array.from({ length: 36 }, (_, i) => {
  const t = (i * Math.PI) / 18;
  return {
    x: CX + 528 * Math.cos(t) + 204.5 * Math.sin(t),
    y: CY + 87.5 * Math.cos(t) - 225.4 * Math.sin(t),
  };
});

const ring = (dy: number) => nodes.map((n) => `${n.x.toFixed(1)},${(n.y - dy).toFixed(1)}`).join(' ');

const AxisCross = ({ x, y }: { x: number; y: number }) => (
  <g transform={`translate(${x} ${y})`} strokeWidth="1.400">
    <path d="M0 0l30 5" stroke="#ff0000" />
    <path d="M38 6.300l-10.300 .7.800-4.800z" fill="#d00000" />
    <path d="M0 0l-11 12" stroke="#00ff00" />
    <path d="M-16 16.500l1.500-7 5 4.500z" fill="#00b400" />
    <path d="M0 0v29" stroke="#0000ff" />
    <path d="M-2.800 27h5.600L0 37z" fill="#0000b0" />
    <g fontFamily="Liberation Sans" fontSize="9" textAnchor="middle">
      <text x="47" y="11" fill="#ff0000">X</text>
      <text x="-18" y="24" fill="#00ee00">Y</text>
      <text x="0" y="49" fontSize="10" fill="#0000ff">Z</text>
    </g>
  </g>
);

function ModelView() {
  const at = (i: number) => nodes[i % 36];
  return (
    <main className="relative min-w-0 flex-1 overflow-hidden border-t-2 border-l-2 border-[#6c6f70] bg-white">
      <svg className="absolute inset-0 h-full w-full" role="img" aria-label="Ring model with line loads">
        <polygon points={ring(0)} fill="none" stroke="#222" strokeWidth="1.700" />
        <path d={`M${at(0).x} ${at(0).y}L${at(18).x} ${at(18).y}M${at(9).x} ${at(9).y}L${at(27).x} ${at(27).y}`} stroke="#000" strokeWidth="1.700" />
        {nodes.map((n, i) => <circle key={i} cx={n.x} cy={n.y} r="2" fill="#7a2c2c" />)}
        {nodes.map((n, i) => {
          const m = at(i + 1);
          return (
            <polygon
              key={i}
              points={`${n.x},${n.y - TOP} ${m.x},${m.y - TOP} ${m.x},${m.y - LIFT} ${n.x},${n.y - LIFT}`}
              fill="#000"
              fillOpacity=".08"
              shapeRendering="crispEdges"
            />
          );
        })}
        {[LIFT, TOP].map((dy) => (
          <g key={dy} fill="none">
            <polygon points={ring(dy)} stroke="#ffa0a0" />
            <polygon points={ring(dy)} stroke="#ff0000" strokeDasharray="3 1" />
          </g>
        ))}
        {nodes.map((n, i) => (
          <g key={i} fill="#ff0000">
            <path d={`M${n.x} ${n.y - TOP}V${n.y - LIFT - 6}`} stroke="#ff0000" />
            <path d={`M${n.x - 4.5} ${n.y - LIFT - 8}h9l-4.500 8z`} />
            <circle cx={n.x} cy={n.y - TOP} r="1.900" />
            <text x={n.x + 1} y={n.y - TOP - 7} fontFamily="Liberation Sans Narrow, Liberation Sans, sans-serif" fontSize="9" textAnchor="middle">1.00</text>
          </g>
        ))}
        <AxisCross x={CX} y={CY} />
        <AxisCross x={54} y={876} />
      </svg>
      <div className="relative pt-[5px] pl-[3px] font-['Liberation_Sans',sans-serif] text-[11px] leading-[14px] text-black">
        <p>LC1</p>
        <p>Loads [kN/m^2]</p>
      </div>
    </main>
  );
}

/* ---------- status bar ---------- */

const toggles: [string, boolean][] = [['SNAP', true], ['GRID', false], ['CARTES', true], ['OSNAP', true], ['GLINES', true], ['DXF', true]];

function StatusBar() {
  return (
    <footer className="flex h-[21px] shrink-0 items-stretch border-t border-[#a4a9b6] bg-linear-to-b from-[#e6e9ef] via-[#a8aeb6] to-[#bdc3cd] leading-5 text-[#1f242b]">
      <span className="flex-1 pl-1">Workplane</span>
      <div className="flex w-[347px] gap-0.5">
        {toggles.map(([t, on]) => (
          <button
            key={t}
            type="button"
            aria-pressed={on}
            className={`border px-px text-xs leading-4 ${on ? 'border-t-black border-r-white border-b-white border-l-black' : 'border-t-white border-r-[#8d939c] border-b-[#8d939c] border-l-white bg-[#bcc2ca]'}`}
          >
            {t}
          </button>
        ))}
      </div>
      <span className="w-[88px]">CS: Global XYZ</span>
      <span className="w-[88px] border-l border-[#8d939c] pl-0.5">Plane: XY</span>
      <span className="w-[74px] border-l border-[#8d939c] pl-px whitespace-pre">X:  4.297 m</span>
      <span className="w-[74px] border-l border-[#8d939c] pl-px whitespace-pre">Y:  2.307 m</span>
      <span className="w-[73px] border-l border-[#8d939c] pl-px whitespace-pre">Z:  0.000 m</span>
    </footer>
  );
}

export default function App() {
  return (
    <div className="flex h-screen flex-col overflow-hidden bg-[#d0d5dd] font-['Open_Sans','Noto_Sans',sans-serif] text-[11px] text-black">
      <header className="flex h-[23px] shrink-0 items-center bg-[#0078d7] pr-0.5 pl-0.5 text-white">
        <svg viewBox="0 0 18 18" className="size-[18px]" aria-hidden="true">
          <path d="M5 6l6-5 6 4v8l-6 4-6-4z" fill="#59616b" />
          <path d="M7 5l5-2 4 3-4 2zM8 9l4 1 4-2M9 13l3 1 4-3" fill="none" stroke="#b3bcc8" strokeWidth="1.200" />
          <path d="M7 7H2v4c5-2 6 5 0 5" fill="none" stroke="#f6b51c" strokeWidth="2" />
        </svg>
        <h1 className="flex-1 pl-[3px] text-xs">RFEM 5.21.01 x64 - [RFEM, LC1*]</h1>
        <button type="button" aria-label="Minimize" className="flex w-[46px] justify-center pb-1"><svg viewBox="0 0 10 10" className="size-2.5"><path d="M0 6.500h10" stroke="#fff" /></svg></button>
        <button type="button" aria-label="Restore" className="flex w-[46px] justify-center pb-1"><svg viewBox="0 0 10 10" className="size-2.5"><path d="M.5 2.500h7v7h-7zM2.500 2V.5h7v7H8" fill="none" stroke="#fff" /></svg></button>
        <button type="button" aria-label="Close" className="flex w-[46px] justify-center pb-1"><svg viewBox="0 0 10 10" className="size-2.5"><path d="M0 0l10 10M10 0L0 10" stroke="#fff" /></svg></button>
      </header>

      <nav className="flex h-6 shrink-0 items-center pr-0.5 pl-[3px] text-[#45494f]">
        <span className="flex w-1.5 flex-col gap-0.5 pl-px">
          <i className="size-0.5 bg-[#b1b7c3]" /><i className="size-0.5 bg-[#b1b7c3]" /><i className="size-0.5 bg-[#b1b7c3]" />
        </span>
        <Icon name="bridge" />
        {menus.map(([a, b, c]) => (
          <button key={b + c} type="button" className="px-2">{a}<u className="underline-offset-2">{b}</u>{c}</button>
        ))}
        <div className="flex flex-1 justify-end pt-1">
          <button type="button" aria-label="Minimize document" className="flex w-4 justify-center"><svg viewBox="0 0 10 10" className="size-2.5"><path d="M1 8h7" stroke="#666" strokeWidth="2" /></svg></button>
          <button type="button" aria-label="Restore document" className="flex w-4 justify-center"><svg viewBox="0 0 10 10" className="size-2.5"><path d="M.5 3.500h7v5h-7zM2 1.500h7.500V7" fill="none" stroke="#777" strokeWidth="1.200" /><path d="M1 3h7" stroke="#666" strokeWidth="2" /></svg></button>
          <button type="button" aria-label="Close document" className="flex w-4 justify-center"><svg viewBox="0 0 10 10" className="size-2.5"><path d="M1 1l7 7M8 1L1 8" stroke="#777" strokeWidth="1.800" /><path d="M0 9.500h10" stroke="#fff" /></svg></button>
        </div>
      </nav>

      <Toolbar groups={rowOne} />
      <Toolbar groups={rowTwo} />

      <div className="flex min-h-0 flex-1">
        <Navigator />
        <div className="flex min-w-0 flex-1 border-b-2 border-[#e3e3e6] pr-0.5 pl-[5px]">
          <ModelView />
        </div>
      </div>
      <StatusBar />
    </div>
  );
}
